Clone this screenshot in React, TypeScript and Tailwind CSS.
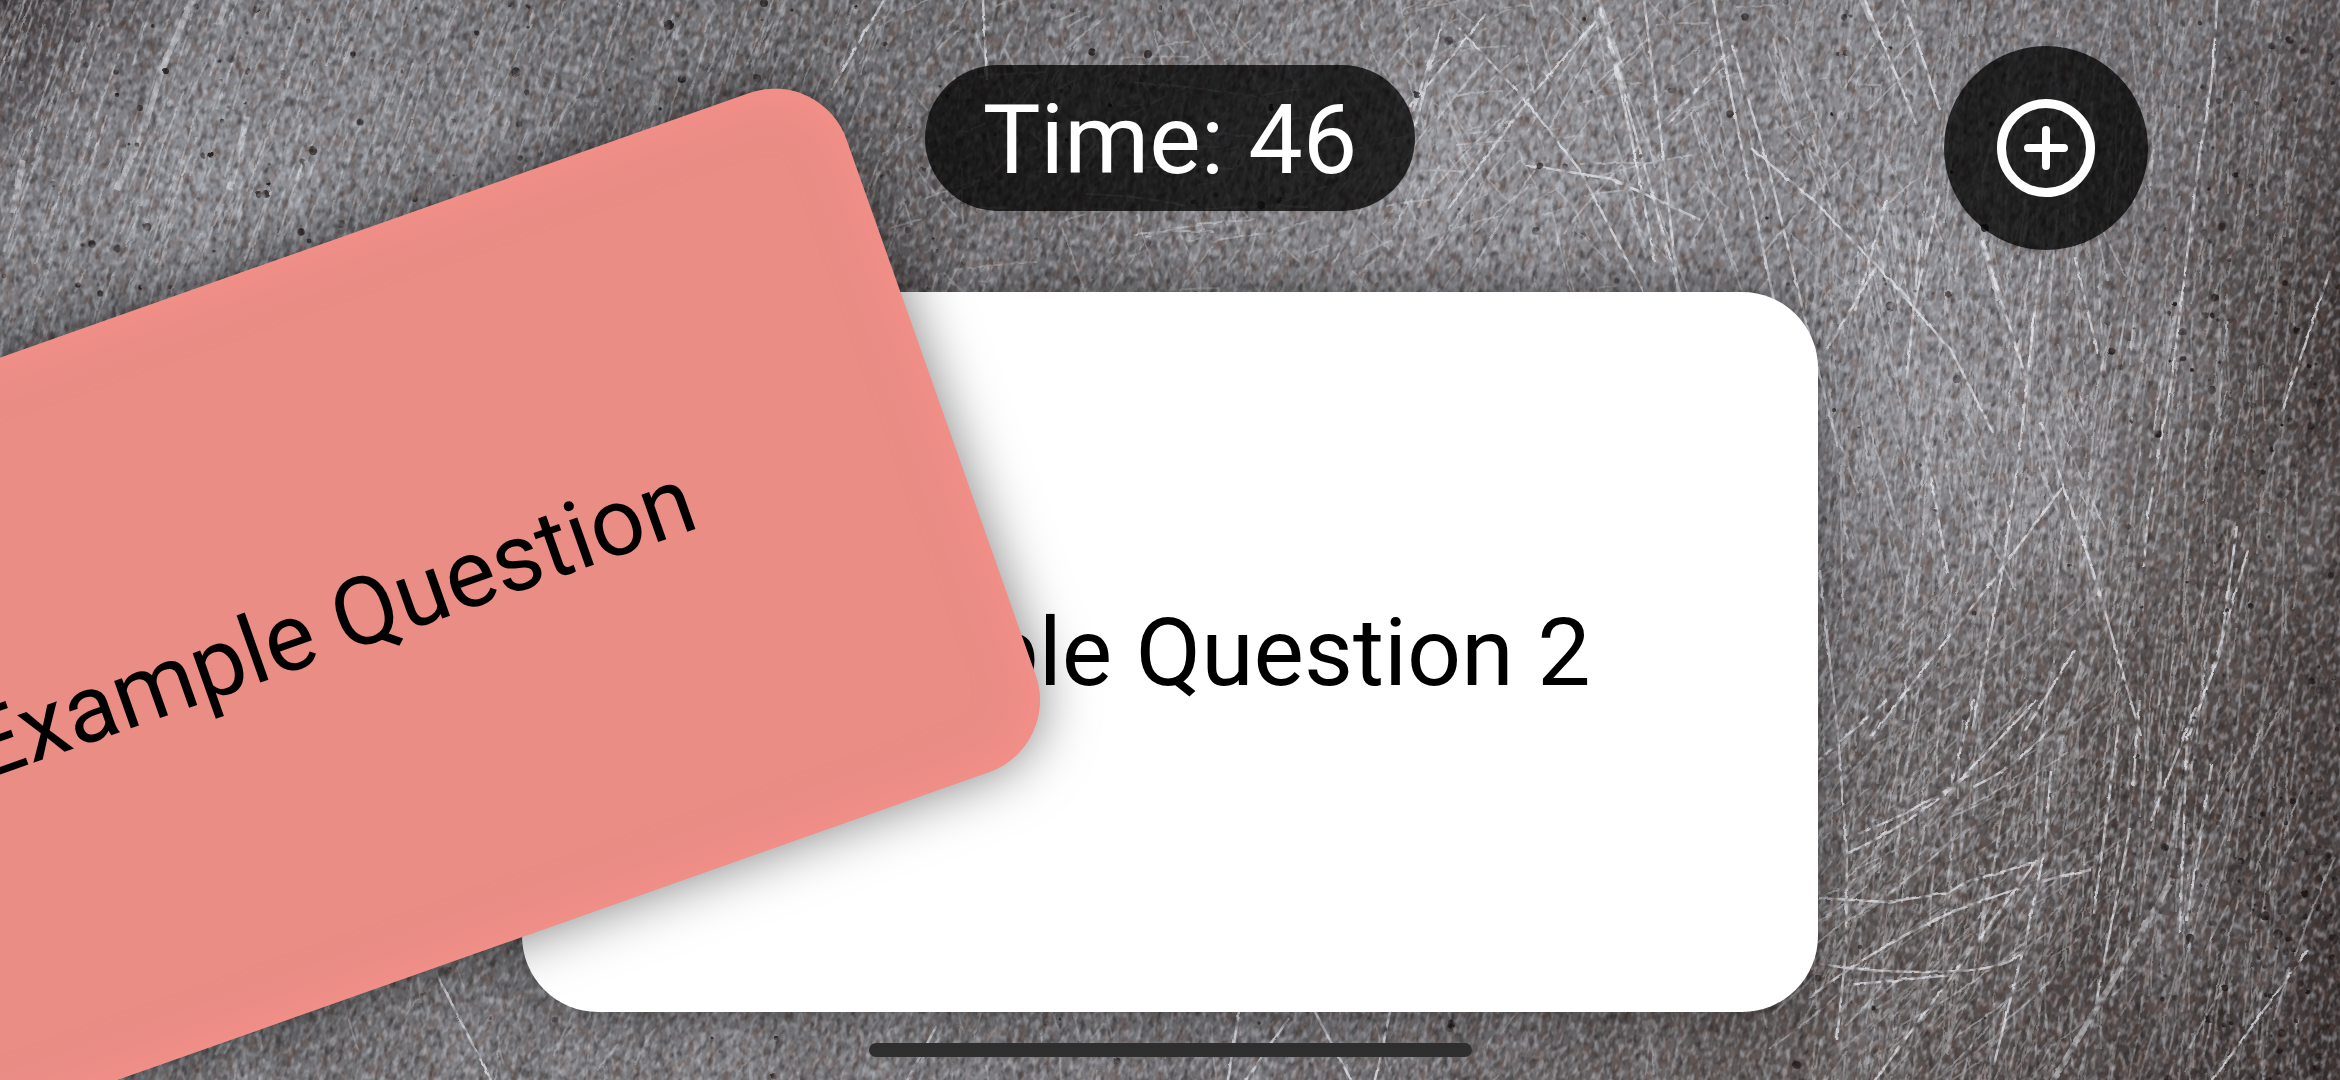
const CARD =
  "flex h-[720px] w-full max-w-[1296px] items-center justify-center rounded-[76px] text-[95px] leading-none";

type Rng = () => number;

function makeRng(seed: number): Rng {
  let s = seed;
  return () => {
    s = (s * 1664525 + 1013904223) % 4294967296;
    return s / 4294967296;
  };
}

/** A family of scratches that share a region, a direction and a curve. */
function scratches(
  seed: number, count: number,
  x0: number, y0: number, x1: number, y1: number,
  angle: number, spread: number, minLen: number, maxLen: number, bend: number,
): string {
  const r = makeRng(seed);
  let d = "";
  for (let i = 0; i < count; i++) {
    const x = x0 + r() * (x1 - x0);
    const y = y0 + r() * (y1 - y0);
    const a = ((angle + (r() - 0.5) * spread) * Math.PI) / 180;
    const len = minLen + r() * r() * (maxLen - minLen);
    const dx = Math.cos(a) * len;
    const dy = Math.sin(a) * len;
    const b = bend * len * (0.4 + r() * 0.6);
    d += `M${Math.round(x)} ${Math.round(y)}q${Math.round(dx / 2 - (dy / len) * b)} ${Math.round(dy / 2 + (dx / len) * b)} ${Math.round(dx)} ${Math.round(dy)}`;
  }
  return d;
}

function pits(seed: number, count: number, x0: number, y0: number, x1: number, y1: number) {
  const r = makeRng(seed);
  return Array.from({ length: count }, () => ({
    x: Math.round(x0 + r() * (x1 - x0)),
    y: Math.round(y0 + r() * (y1 - y0)),
    r: 1.5 + r() * r() * 4,
    o: 0.4 + r() * 0.5,
  }));
}

const FINE = [
  scratches(3, 520, -40, -40, 900, 360, 110, 12, 20, 140, 0.04),
  scratches(5, 340, 900, -20, 1900, 300, 110, 140, 15, 110, 0.04),
  scratches(7, 900, 1800, -40, 2300, 1080, 97, 18, 25, 150, 0.05),
  scratches(8, 300, 1820, 200, 2100, 560, 90, 34, 20, 110, 0.04),
  scratches(11, 240, 1820, 560, 2140, 1080, 128, 40, 30, 170, -0.08),
  scratches(12, 120, 0, 900, 1900, 1080, 100, 60, 20, 90, 0.04),
].join("");

const MEDIUM = [
  scratches(21, 26, 1500, -40, 1900, 240, 74, 10, 60, 220, 0.02),
  scratches(22, 26, 1380, 0, 1950, 200, 128, 24, 40, 180, 0.04),
  scratches(23, 46, 1820, 200, 2100, 520, 80, 34, 40, 180, 0.02),
  scratches(24, 90, 1900, 100, 2240, 900, 98, 10, 50, 240, 0.04),
  scratches(25, 18, 1860, 640, 2080, 1000, 140, 24, 60, 200, -0.08),
  scratches(26, 18, 1180, 80, 1700, 280, 176, 24, 40, 180, 0.06),
  scratches(27, 30, 20, -20, 420, 200, 109, 6, 60, 180, 0.02),
  scratches(28, 12, 2180, 600, 2340, 1080, 112, 14, 60, 260, 0.04),
].join("");

const LONG = [
  "M1598 0L1640 150L1682 300M1607 31L1632 140L1655 262M1713 0L1740 140L1775 305M1732 45L1768 165L1803 310",
  "M1865 0L1917 125M1903 0L1940 110M1751 148L1813 200L1910 300M1459 28L1527 102L1579 169L1648 300",
  "M1596 21L1531 96L1445 213M1486 14L1410 107M1443 20L1415 127M1527 165L1613 179L1700 220",
  "M1940 193L1913 310M1887 200L1855 310M1644 0L1662 145L1679 300M1725 55L1669 124",
  "M1982 240L2027 381M2041 422L2093 570L2141 736M2041 254L2020 447L2003 567L1972 732M1800 298L1838 447",
  "M1820 570L1838 736L1847 853L1846 950L1837 1040M1872 260L1951 350L1993 433M1920 240L1907 378",
  "M2217 0Q2214 90 2200 150L2189 240L2172 378L2148 515L2144 567M2062 488L2003 567L1872 736M2075 257L2098 354",
  "M1931 477L1948 574M2237 526L2220 653L2189 736M2248 550L2213 670M2330 271L2282 412M1876 267L1824 354M2075 650L2024 732",
  "M1819 898L1887 902L1948 893L1966 882L2037 862M1848 853Q1900 830 1951 789L2037 700M1858 834Q1920 810 1969 775",
  "M1973 787Q2020 765 2048 730M1808 998Q1900 930 1976 903T2091 870M1819 964Q1890 975 1958 971T2026 941M1848 985L1951 975",
  "M1974 700L1950 789M2051 771L2044 853L2026 939L1994 1064M2196 707L2151 821M2187 736L2180 932M2212 764L2187 921",
  "M2140 700L2133 786M2119 721L2094 914M2130 828L2094 1014M2308 950L2201 1096M2037 860L1958 968L1858 1103M1887 700L1819 760",
  "M1239 1012L1228 1080M1289 1018L1246 1080M1315 1012L1351 1080M1390 1012L1376 1080M936 1027L907 1080",
  "M983 0L987 80M1437 40L1413 112M884 0L831 90M435 971L491 1080",
].join("");

const HEAVY =
  "M2173 878L2119 971L2037 1107M192 0L163 67L143 133L117 190M227 0L218 25M247 117L230 190M23 160L13 213M1598 0L1625 80M1860 -5L1880 40M1982 240L2000 300";

const PITS = [
  ...pits(31, 170, 0, 0, 1000, 360),
  ...pits(32, 50, 900, 0, 1900, 300),
  ...pits(33, 70, 1820, 0, 2340, 1080),
  ...pits(34, 130, 2160, 0, 2340, 1080),
  ...pits(35, 70, 2240, 780, 2340, 1080),
  ...pits(36, 50, 200, 940, 1900, 1080),
];

function BrushedMetal() {
  return (
    <svg
      aria-hidden="true"
      className="absolute inset-0 h-full w-full"
      viewBox="0 0 2340 1080"
      preserveAspectRatio="xMidYMid slice"
    >
      <defs>
        <linearGradient id="metal" x1="0" y1="0" x2="1" y2="0.4">
          <stop offset="0" stopColor="#77787d" />
          <stop offset="0.3" stopColor="#6b6b6e" />
          <stop offset="0.6" stopColor="#7a797c" />
          <stop offset="0.8" stopColor="#717074" />
          <stop offset="1" stopColor="#5c5655" />
        </linearGradient>
        <radialGradient id="glow">
          <stop offset="0" stopColor="#c8cbd4" stopOpacity="0.32" />
          <stop offset="1" stopColor="#c8cbd4" stopOpacity="0" />
        </radialGradient>
        <radialGradient id="shade">
          <stop offset="0" stopColor="#1c1414" stopOpacity="0.6" />
          <stop offset="1" stopColor="#1c1414" stopOpacity="0" />
        </radialGradient>
        <filter id="light" x="0" y="0" width="100%" height="100%" colorInterpolationFilters="sRGB">
          <feTurbulence type="fractalNoise" baseFrequency="0.2 0.11" numOctaves="2" seed="4" />
          <feColorMatrix values="0 0 0 0 0.88  0 0 0 0 0.89  0 0 0 0 0.93  2.6 0 0 0 -1.15" />
        </filter>
        <filter id="dark" x="0" y="0" width="100%" height="100%" colorInterpolationFilters="sRGB">
          <feTurbulence type="fractalNoise" baseFrequency="0.16 0.1" numOctaves="2" seed="19" />
          <feColorMatrix values="0 0 0 0 0.12  0 0 0 0 0.1  0 0 0 0 0.1  2.4 0 0 0 -1.05" />
        </filter>
        <filter id="rust" x="0" y="0" width="100%" height="100%" colorInterpolationFilters="sRGB">
          <feTurbulence type="fractalNoise" baseFrequency="0.09 0.06" numOctaves="3" seed="8" />
          <feColorMatrix values="0 0 0 0 0.42  0 0 0 0 0.31  0 0 0 0 0.27  0 3 0 0 -1.4" />
        </filter>
        <filter id="cloud" x="0" y="0" width="100%" height="100%" colorInterpolationFilters="sRGB">
          <feTurbulence type="fractalNoise" baseFrequency="0.018 0.005" numOctaves="3" seed="2" />
          <feColorMatrix values="0 0 0 0 0.8  0 0 0 0 0.82  0 0 0 0 0.86  2.2 0 0 0 -1" />
        </filter>
        <filter id="worn" x="0" y="0" width="100%" height="100%" colorInterpolationFilters="sRGB">
          <feTurbulence type="fractalNoise" baseFrequency="0.1" numOctaves="2" seed="6" result="n" />
          <feDisplacementMap in="SourceGraphic" in2="n" scale="3" xChannelSelector="R" yChannelSelector="G" result="s" />
          <feColorMatrix in="n" values="0 0 0 0 1  0 0 0 0 1  0 0 0 0 1  3 0 0 0 -0.7" result="m" />
          <feComposite in="s" in2="m" operator="in" />
        </filter>
      </defs>
      <rect width="2340" height="1080" fill="url(#metal)" />
      <ellipse cx="230" cy="170" rx="420" ry="260" fill="url(#glow)" />
      <ellipse cx="1560" cy="160" rx="560" ry="260" fill="url(#glow)" />
      <ellipse cx="1960" cy="400" rx="260" ry="360" fill="url(#glow)" />
      <ellipse cx="0" cy="0" rx="260" ry="220" fill="url(#shade)" />
      <ellipse cx="780" cy="260" rx="400" ry="200" fill="url(#shade)" opacity="0.4" />
      <ellipse cx="2340" cy="1040" rx="460" ry="520" fill="url(#shade)" />
      <ellipse cx="2380" cy="300" rx="220" ry="600" fill="url(#shade)" />
      <g transform="rotate(12 1170 540)">
        <rect x="-300" y="-500" width="2940" height="2080" filter="url(#cloud)" opacity="0.25" />
        <rect x="-300" y="-500" width="2940" height="2080" filter="url(#dark)" opacity="0.55" />
        <rect x="-300" y="-500" width="2940" height="2080" filter="url(#rust)" opacity="0.4" />
        <rect x="-300" y="-500" width="2940" height="2080" filter="url(#light)" opacity="0.45" />
      </g>
      <g fill="none" stroke="#e8eaf0" filter="url(#worn)">
        <rect width="2340" height="1080" stroke="none" />
        <path d={FINE} strokeWidth="2" opacity="0.3" />
        <path d={MEDIUM} strokeWidth="2" opacity="0.42" />
        <path d={LONG} strokeWidth="2.5" opacity="0.75" />
        <path d={HEAVY} strokeWidth="6" opacity="0.5" />
      </g>
      <g fill="#1a1212" filter="url(#worn)">
        {PITS.map((p, i) => (
          <circle key={i} cx={p.x} cy={p.y} r={p.r} opacity={p.o} />
        ))}
      </g>
    </svg>
  );
}

function AddIcon() {
  return (
    <svg aria-hidden="true" className="size-[98px]" viewBox="0 0 98 98" fill="none" stroke="currentColor" strokeLinecap="round">
      <circle cx="49" cy="49" r="44.5" strokeWidth="9" />
      <path d="M49 31v36M31 49h36" strokeWidth="8" />
    </svg>
  );
}

export default function App() {
  return (
    <main className="relative isolate min-h-screen overflow-hidden bg-[#6a6a6e] font-['Roboto','Liberation_Sans',sans-serif]">
      <BrushedMetal />
      <div className="relative flex min-h-screen flex-col items-center justify-between pt-[65px] pb-[23px]">
        <header className="flex h-[146px] w-full items-center justify-center">
          <p className="z-10 flex h-[146px] items-center rounded-full bg-black/75 px-[58px] pt-1 text-[97px] leading-none whitespace-nowrap text-white">
            Time: 46
          </p>
        </header>
        <section aria-label="Cards" className="relative mt-auto mb-[31px] flex w-full justify-center">
          <article className={`${CARD} bg-white text-black shadow-[0_0_48px_rgba(0,0,0,0.4)]`}>
            <h2 className="whitespace-nowrap">Example Question 2</h2>
          </article>
          <div className="absolute inset-x-0 -top-[29px] flex -translate-x-[840px] justify-center">
            <article className={`${CARD} shrink-0 -rotate-[19.45deg] bg-[#e98d85] text-black shadow-[0_0_56px_rgba(0,0,0,0.5),inset_0_0_56px_#f8908b]`}>
              <h2 className="whitespace-nowrap">Example Question</h2>
            </article>
          </div>
        </section>
        <div className="h-[14px] w-[603px] rounded-full bg-[#303030]" />
      </div>
      <button
        type="button"
        aria-label="Add card"
        className="absolute top-[46px] right-[192px] flex size-[204px] items-center justify-center rounded-full bg-black/75 text-white"
      >
        <AddIcon />
      </button>
    </main>
  );
}
